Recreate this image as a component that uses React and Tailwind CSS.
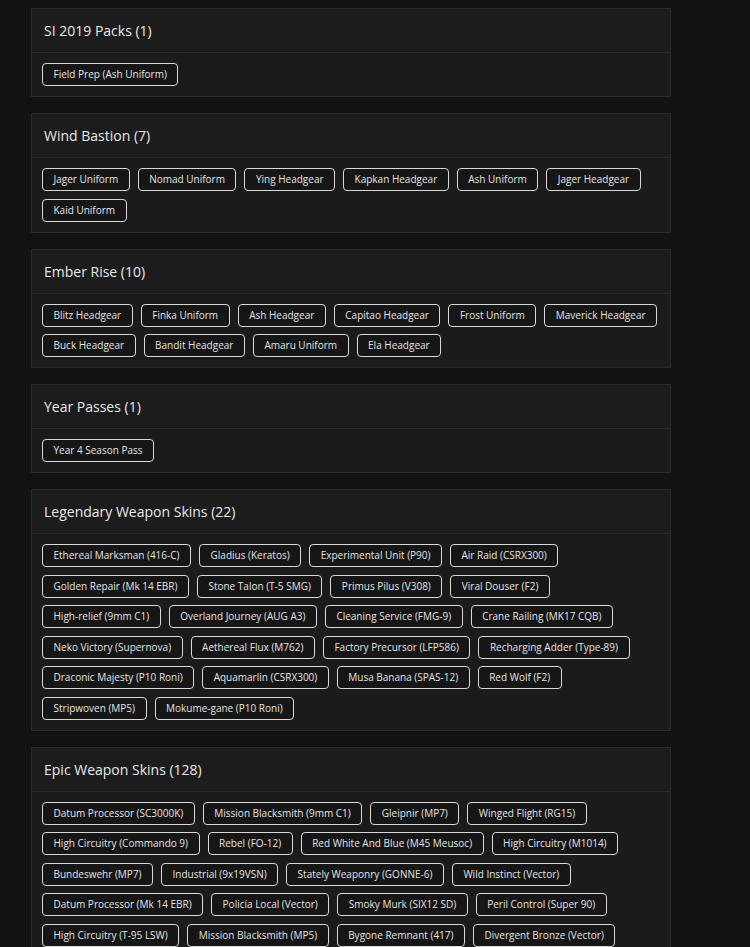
import React from 'react'

const sections = [
  { title: 'SI 2019 Packs', items: ['Field Prep (Ash Uniform)'] },
  {
    title: 'Wind Bastion',
    items: ['Jager Uniform', 'Nomad Uniform', 'Ying Headgear', 'Kapkan Headgear', 'Ash Uniform', 'Jager Headgear', 'Kaid Uniform'],
  },
  {
    title: 'Ember Rise',
    items: [
      'Blitz Headgear', 'Finka Uniform', 'Ash Headgear', 'Capitao Headgear', 'Frost Uniform',
      'Maverick Headgear', 'Buck Headgear', 'Bandit Headgear', 'Amaru Uniform', 'Ela Headgear',
    ],
  },
  { title: 'Year Passes', items: ['Year 4 Season Pass'] },
  {
    title: 'Legendary Weapon Skins',
    items: [
      'Ethereal Marksman (416-C)', 'Gladius (Keratos)', 'Experimental Unit (P90)', 'Air Raid (CSRX300)',
      'Golden Repair (Mk 14 EBR)', 'Stone Talon (T-5 SMG)', 'Primus Pilus (V308)', 'Viral Douser (F2)',
      'High-relief (9mm C1)', 'Overland Journey (AUG A3)', 'Cleaning Service (FMG-9)', 'Crane Railing (MK17 CQB)',
      'Neko Victory (Supernova)', 'Aethereal Flux (M762)', 'Factory Precursor (LFP586)', 'Recharging Adder (Type-89)',
      'Draconic Majesty (P10 Roni)', 'Aquamarlin (CSRX300)', 'Musa Banana (SPAS-12)', 'Red Wolf (F2)',
      'Stripwoven (MP5)', 'Mokume-gane (P10 Roni)',
    ],
  },
  {
    title: 'Epic Weapon Skins',
    count: 128,
    items: [
      'Datum Processor (SC3000K)', 'Mission Blacksmith (9mm C1)', 'Gleipnir (MP7)', 'Winged Flight (RG15)',
      'High Circuitry (Commando 9)', 'Rebel (FO-12)', 'Red White And Blue (M45 Meusoc)', 'High Circuitry (M1014)',
      'Bundeswehr (MP7)', 'Industrial (9x19VSN)', 'Stately Weaponry (GONNE-6)', 'Wild Instinct (Vector)',
      'Datum Processor (Mk 14 EBR)', 'Policía Local (Vector)', 'Smoky Murk (SIX12 SD)', 'Peril Control (Super 90)',
      'High Circuitry (T-95 LSW)', 'Mission Blacksmith (MP5)', 'Bygone Remnant (417)', 'Divergent Bronze (Vector)',
    ],
  },
]

function Tag({ label }) {
  return (
    <span className="h-[23px] px-[10.5px] flex items-center rounded-[4px] border border-[#d9d9d9] bg-[#161616] text-[10px] text-[#e4e4e4] whitespace-nowrap">
      {label}
    </span>
  )
}

function Section({ title, count, items }) {
  return (
    <div className="border border-[#2a2a2a] bg-[#1b1b1b]">
      <div className="h-[44px] px-3 flex items-center border-b border-[#2a2a2a] bg-[#1c1c1c]">
        <h2 className="text-[14px] font-medium text-[#e8e8e8]">
          {title} ({count ?? items.length})
        </h2>
      </div>
      <div className="p-[10px] flex flex-wrap gap-x-2 gap-y-[7.5px]">
        {items.map((it) => (
          <Tag key={it} label={it} />
        ))}
      </div>
    </div>
  )
}

export default function App() {
  return (
    <div
      className="min-h-screen bg-[#121212] pl-[31px] pt-2 pb-6"
      style={{ fontFamily: '"Open Sans", "Liberation Sans", sans-serif' }}
    >
      <div className="w-[640px] flex flex-col gap-[16px]">
        {sections.map((s) => (
          <Section key={s.title} {...s} />
        ))}
      </div>
    </div>
  )
}
